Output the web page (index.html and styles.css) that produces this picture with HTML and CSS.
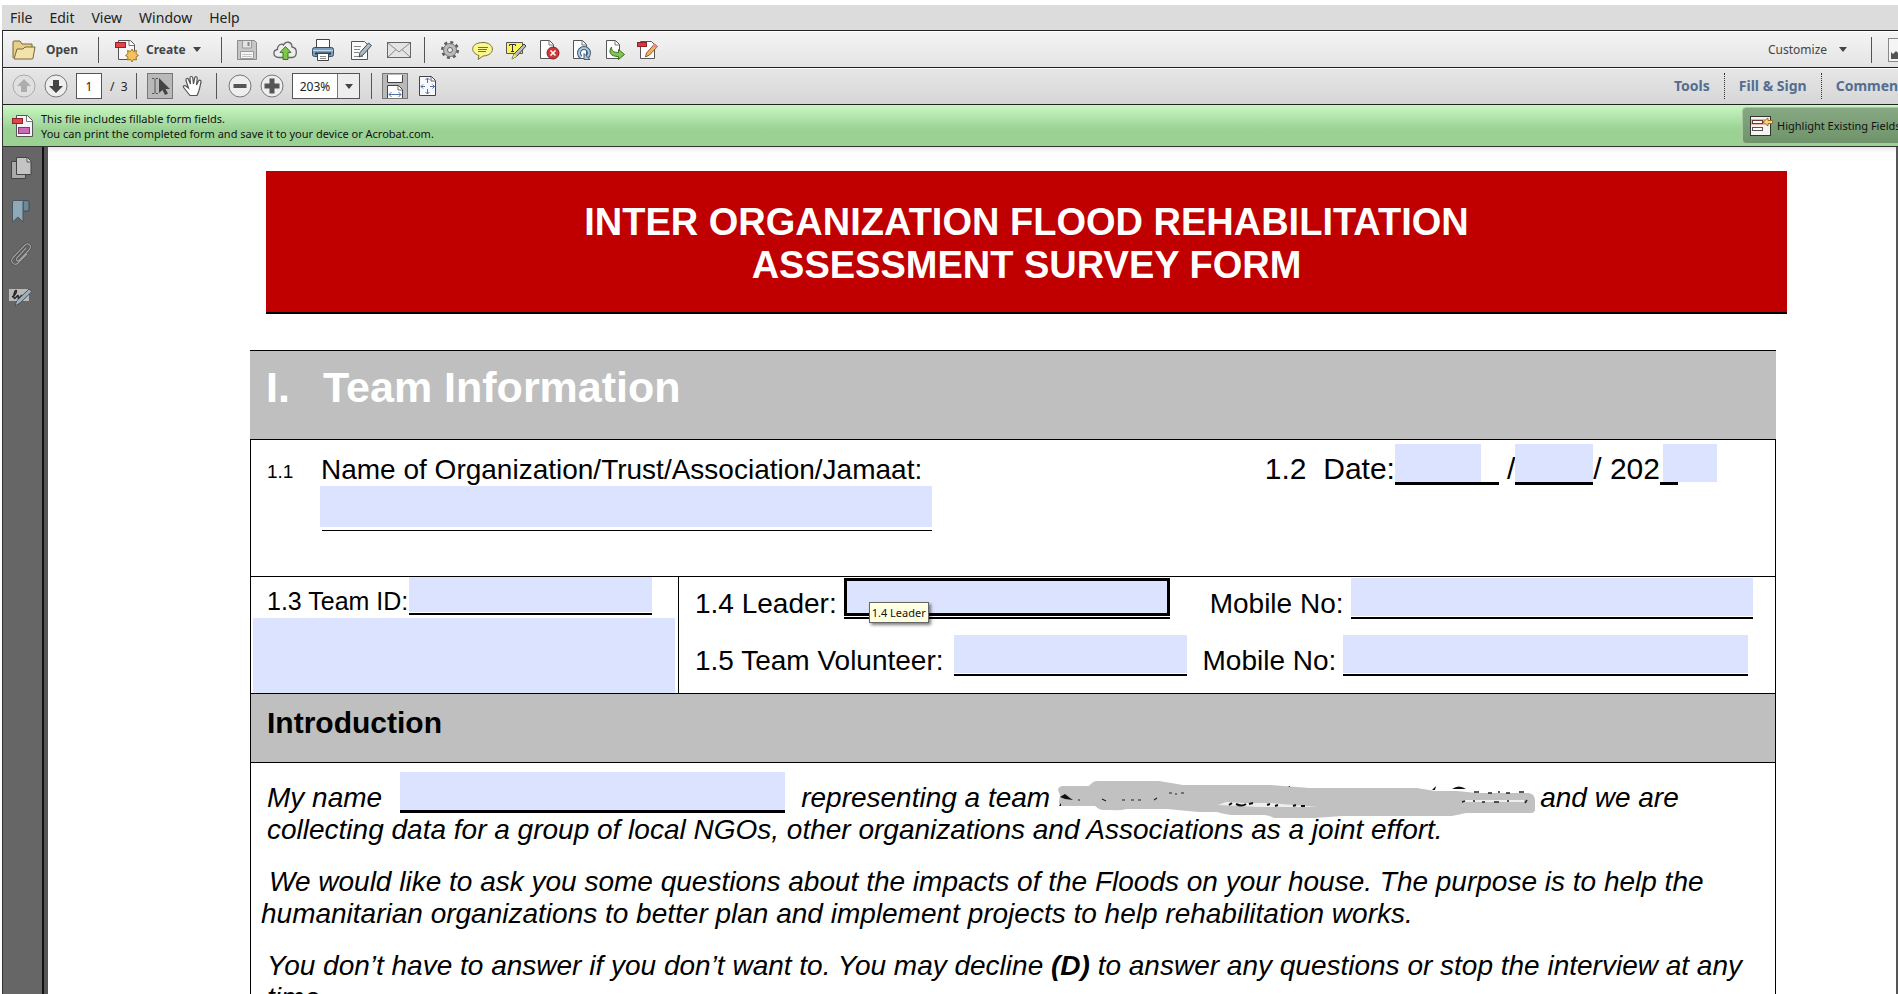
FILE: index.html
```html
<!DOCTYPE html>
<html lang="en">
<head>
    <meta charset="UTF-8">
    <meta name="viewport" content="width=device-width, initial-scale=1.0">
    <title>Assessment Survey Form</title>
    <link rel="stylesheet" href="styles.css">
</head>
<body>
    <nav class="menu-bar">
        <button>File</button>
        <button>Edit</button>
        <button>View</button>
        <button>Window</button>
        <button>Help</button>
    </nav>

    <div class="app">
        <!-- Main toolbar -->
        <div class="toolbar">
            <div class="group open">
                <button class="text-button">
                    <svg width="24" height="20" viewBox="0 0 24 20"><path d="M1 18V2q0-1 1-1h6l2 3h10v4" fill="#e8cf86" stroke="#77663a"/><path d="M2 19L5 9h6l2-2h10l-2 11q0 1-1 1z" fill="#f3e3ab" stroke="#77663a"/></svg>
                    Open
                </button>
            </div>
            <span class="sep"></span>
            <div class="group create">
                <button class="text-button">
                    <svg width="24" height="24" viewBox="0 0 24 24"><path d="M3.500 2.500h12l4 4v15h-16z" fill="#f7f7f7" stroke="#555"/><path d="M14 2.500v5h5" fill="#fff" stroke="#777"/><rect x=".5" y="4.500" width="10" height="5" fill="#e3434b" stroke="#8c2329"/><path d="M17 11l1.500 2.500 3-1-.5 3 2.500 2-2.500 1.500.5 3-3-.5L17 24l-1.500-2.500-3 .5.500-3-2.500-1.500 2.500-2-.5-3 3 1z" fill="#f4c25a" stroke="#a3752a"/></svg>
                    Create
                    <svg class="caret" width="8" height="5" viewBox="0 0 8 5"><path d="M0 0h8L4 5z" fill="#444"/></svg>
                </button>
            </div>
            <span class="sep"></span>
            <div class="group wide">
                <button class="icon" aria-label="Save"><svg viewBox="0 0 24 24"><path d="M2.500 2.500h17l2 2v17h-19z" fill="#c6c6c6" stroke="#8b8b8b"/><path d="M7.500 3v7h9V3" fill="#e3e3e3" stroke="#999"/><path d="M13.500 4v4" stroke="#888" stroke-width="2"/><path d="M5.500 13.500h13v7h-13z" fill="#f5f5f5" stroke="#999"/><path d="M7 16.500h10M7 18.500h10" stroke="#c3c3c3"/></svg></button>
                <button class="icon" aria-label="Upload"><svg viewBox="0 0 24 24"><path d="M6 19.500C-1 19 0 12 4.500 11.500 4 7 9 5 10.500 7 13 2 19 4 19 9c6 1 5.500 10 0 10.500z" fill="#eee" stroke="#666" stroke-width="1.300"/><path d="M12.500 8.500l5.500 6h-3v7h-5v-7H7z" fill="#7fc64b" stroke="#3c7a22"/></svg></button>
                <button class="icon" aria-label="Print"><svg viewBox="0 0 24 24"><path d="M5.500 10V1.500h13V10" fill="#fff" stroke="#444"/><rect x="1.500" y="9.500" width="21" height="9" rx="2" fill="#7c9dbd" stroke="#35506b"/><path d="M2 12.500h20" stroke="#c4d8ea"/><path d="M4 15.500h16" stroke="#28394b" stroke-width="2"/><path d="M6.500 15.500h11v7h-11z" fill="#fff" stroke="#444"/><path d="M9 18.500h6M9 20.500h6" stroke="#888"/></svg></button>
                <button class="icon" aria-label="Edit"><svg viewBox="0 0 24 24"><path d="M2.500 3.500h13l3 3v15h-16z" fill="#fafafa" stroke="#555"/><path d="M5 8.500h7M5 11.500h6M5 14.500h5M5 18.500h9" stroke="#888"/><path d="M19.500 5l3 2.500-8.500 9.500-4 2 1-4.500z" fill="#a9bccb" stroke="#3f4a54"/></svg></button>
                <button class="icon" aria-label="Email"><svg viewBox="0 0 24 24"><rect x=".5" y="4.500" width="23" height="15" fill="#e4e4e4" stroke="#666"/><path d="M1 5l11 9L23 5M1 19l8-7.500M23 19l-8-7.500" fill="none" stroke="#888"/></svg></button>
            </div>
            <span class="sep"></span>
            <div class="group tight">
                <button class="icon" aria-label="Settings"><svg viewBox="0 0 24 24"><circle cx="12" cy="12" r="7.500" fill="none" stroke="#5d5d5d" stroke-width="3" stroke-dasharray="2.945 2.945"/><circle cx="12" cy="12" r="6.500" fill="#bbb" stroke="#777"/><circle cx="12" cy="12" r="2.500" fill="#eee" stroke="#666"/></svg></button>
                <button class="icon" aria-label="Comment"><svg viewBox="0 0 24 24"><path d="M12 4.500c12 0 13 13 0 13.500l-5 3.500 1-4C-1 15-1 4.500 12 4.500z" fill="#fbf78f" stroke="#77733a"/><path d="M7 9.500h10M7 11.500h9M7 13.500h8" stroke="#77733a"/></svg></button>
                <button class="icon" aria-label="Highlight text"><svg viewBox="0 0 24 24"><path d="M2.500 4.500h16v11h-16z" fill="#fbf45c" stroke="#555"/><path d="M5.500 8V6.500h6V8M8.500 6.500v7M7 13.500h3" fill="none" stroke="#333"/><path d="M20 6l2 2-9 10-5 3 2-5z" fill="#b9bdb9" stroke="#444"/><path d="M10 16l3 2-5 3z" fill="#eee95b"/></svg></button>
                <button class="icon" aria-label="Delete pages"><svg viewBox="0 0 24 24"><path d="M3.500 2.500h9l4 4v14h-13z" fill="#fff" stroke="#555"/><path d="M12 2.500v4.500h4" fill="none" stroke="#777"/><circle cx="16" cy="15" r="6" fill="#d2373b" stroke="#812024"/><path d="M13.500 12.500l5 5m0-5l-5 5" stroke="#fff" stroke-width="1.600"/></svg></button>
                <button class="icon" aria-label="Rotate pages"><svg viewBox="0 0 24 24"><path d="M3.500 2.500h9l4 4v14h-13z" fill="#fff" stroke="#555"/><path d="M12 2.500v4.500h4" fill="none" stroke="#777"/><path d="M11 19a5 5 0 1 1 6 0" fill="none" stroke="#456079" stroke-width="4"/><path d="M11 19a5 5 0 1 1 6 0" fill="none" stroke="#a9c8e4" stroke-width="2"/><path d="M14 15.500v6h6z" fill="#a9c8e4" stroke="#456079"/></svg></button>
                <button class="icon" aria-label="Extract pages"><svg viewBox="0 0 24 24"><path d="M3.500 2.500h9l4 4v14h-13z" fill="#fff" stroke="#555"/><path d="M12 2.500v4.500h4" fill="none" stroke="#777"/><path d="M8.500 9c0 4 2 5.500 7 5.500v-3l6 5-6 5v-3c-8 0-10.500-4-7-9.500z" fill="#83c64f" stroke="#376f22"/></svg></button>
                <button class="icon" aria-label="Edit PDF"><svg viewBox="0 0 24 24"><path d="M4.500 3.500h11l3 3v14h-14z" fill="#fff" stroke="#555"/><rect x="1.500" y="4.500" width="9" height="4" fill="#e3343b" stroke="#8c2329"/><path d="M18.500 6l3 2.500-8 8.500-4 2 1-4z" fill="#f1b16b" stroke="#8c5a2c"/><path d="M18.500 6l3 2.500-2 2-3-2.500z" fill="#ef8b86"/></svg></button>
            </div>
            <div class="customize">
                <button class="plain">Customize <svg class="caret" width="8" height="5" viewBox="0 0 8 5"><path d="M0 0h8L4 5z" fill="#444"/></svg></button>
                <span class="sep"></span>
                <button class="icon" aria-label="Read mode"><svg viewBox="0 0 24 24"><rect x=".5" y=".5" width="23" height="23" fill="#f5f5f5" stroke="#888"/><path d="M3 21v-7l2 2 3-3 2 2 6-6v12z" fill="#555"/></svg></button>
            </div>
        </div>

        <!-- Page and zoom toolbar -->
        <div class="toolbar second">
            <div class="group pages">
                <button class="icon" aria-label="Previous page"><svg viewBox="0 0 24 24"><circle cx="12" cy="12" r="11" fill="#e0e0e0" stroke="#aaa"/><path d="M12 5l7 7h-4v6H9v-6H5z" fill="#adadad"/></svg></button>
                <button class="icon" aria-label="Next page"><svg viewBox="0 0 24 24"><circle cx="12" cy="12" r="11" fill="#eee" stroke="#777"/><path d="M12 19l-7-7h4V6h6v6h4z" fill="#444"/></svg></button>
                <input class="page-number" type="text" value="1" aria-label="Page number">
                <span>/&nbsp; 3</span>
            </div>
            <span class="sep"></span>
            <div class="group tools">
                <button class="icon pressed" aria-label="Select"><svg viewBox="0 0 24 24"><path d="M4 4.500h2l1 1 1-1h2M7 5.500v13M4 19.500h2l1-1 1 1h2" fill="none" stroke="#555"/><path d="M11 4v15l3.500-3 2.500 5 3-1.500-2.500-4.500H22z" fill="#444"/></svg></button>
                <button class="icon" aria-label="Hand"><svg viewBox="0 0 24 24"><path d="M9 21.500L3 14c-2-2.500 1-3 2.500-1.500L7.500 14 5 6.500c-.5-2.500 2-2.500 2.500-1L9.500 10 9 4c0-2 2.500-2 2.800 0l.7 6 1.200-6c.5-2 2.800-1.500 2.500.5L15.500 11l2-4c1-1.500 3-.5 2.500 1-1 4-1.500 9-4 13.500z" fill="#fff" stroke="#555" stroke-width="1.200"/></svg></button>
            </div>
            <span class="sep"></span>
            <div class="group zoom">
                <button class="icon" aria-label="Zoom out"><svg viewBox="0 0 24 24"><circle cx="12" cy="12" r="11" fill="#eee" stroke="#777"/><path d="M5.500 10h13v4h-13z" fill="#555"/></svg></button>
                <button class="icon" aria-label="Zoom in"><svg viewBox="0 0 24 24"><circle cx="12" cy="12" r="11" fill="#eee" stroke="#777"/><path d="M4.500 9.500h5v-5h5v5h5v5h-5v5h-5v-5h-5z" fill="#555"/></svg></button>
                <div class="combo">
                    <input type="text" value="203%" aria-label="Zoom level">
                    <button aria-label="Zoom presets"><svg width="8" height="5" viewBox="0 0 8 5"><path d="M0 0h8L4 5z" fill="#444"/></svg></button>
                </div>
            </div>
            <span class="sep"></span>
            <div class="group tools">
                <button class="icon pressed" aria-label="Fit width"><svg viewBox="0 0 24 24"><path d="M4.500 1v7.500h15V1" fill="#fff" stroke="#444"/><path d="M4.500 24V11.500h11l4 4V24" fill="#fff" stroke="#444"/><path d="M15 12v4h4" fill="none" stroke="#666"/><path d="M6 20.500h12M8.500 18L6 20.500 8.500 23M15.500 18l2.500 2.500-2.500 2.500" fill="none" stroke="#5470a8"/></svg></button>
                <button class="icon" aria-label="Fit page"><svg viewBox="0 0 24 24"><path d="M3.500 2.500h12l4 4v15h-16z" fill="#f6f8fb" stroke="#444"/><path d="M15 3v4h4" fill="none" stroke="#666"/><path d="M11.500 4v5M11.500 15v5M5 12.500h4M14 12.500h5" stroke="#5470a8"/><path d="M9.500 6l2-2 2 2M9.500 18l2 2 2-2M7 10.500l-2 2 2 2M16.500 10.500l2 2-2 2" fill="none" stroke="#5470a8"/></svg></button>
            </div>
            <div class="panes">
                <a href="#">Tools</a>
                <a href="#">Fill &amp; Sign</a>
                <a href="#">Comment</a>
            </div>
        </div>

        <!-- Form message bar -->
        <div class="message-bar">
            <svg width="22" height="24" viewBox="0 0 22 24"><path d="M4.500 1.500h11l5 5v16h-16z" fill="#faf4fa" stroke="#555"/><path d="M14.500 2v5.500h6" fill="#fff" stroke="#777"/><rect x=".5" y="4.500" width="10" height="5" fill="#e3434b" stroke="#8c2329"/><rect x="6.500" y="13.500" width="11" height="6" fill="#cc6bb5" stroke="#7a3a6c"/></svg>
            <p>This file includes fillable form fields.<br>You can print the completed form and save it to your device or Acrobat.com.</p>
            <div class="highlight-slot">
                <button class="highlight">
                    <svg width="23" height="20" viewBox="0 0 23 20"><rect x=".5" y=".5" width="20" height="19" fill="#f7f3f0" stroke="#333"/><rect x="1" y="3" width="14" height="6" fill="#eeb0a0"/><rect x="2.500" y="4.500" width="10" height="3" fill="#fff" stroke="#6b3a33"/><rect x="2.500" y="11.500" width="10" height="3" fill="#fff" stroke="#555"/><path d="M13 6l5-4v2.500h4.500v3H18V10z" fill="#f7d774" stroke="#94712b"/></svg>
                    Highlight Existing Fields
                </button>
            </div>
        </div>

        <div class="workspace">
            <aside class="side-bar">
                <button aria-label="Page thumbnails"><svg viewBox="0 0 24 24"><path d="M2.500 5.500h14v17h-14z" fill="#aaa" stroke="#444"/><path d="M7.500 1.500h11l3.500 3.500v13.500H7.500z" fill="#c4c4c4" stroke="#444"/><path d="M18 2v4h4" fill="#ddd" stroke="#555"/></svg></button>
                <button aria-label="Bookmarks"><svg viewBox="0 0 24 24"><path d="M14 1.500h4q2 0 2 2V12h-6z" fill="#6f8898" stroke="#3f4c55"/><path d="M3.500 3q0-1.500 1.500-1.500h11q-2 0-2 2V23l-5-5-5.500 5z" fill="#8fa9b9" stroke="#46555f"/></svg></button>
                <button aria-label="Attachments"><svg viewBox="0 0 24 24"><path d="M17 6L8 16c-1.500 2 .5 4 2.500 2L20 8c4-4.500-1-8-4.500-4.500L4 15.500c-4 5 2 9 5.500 5L18 12" fill="none" stroke="#4c4c4c" stroke-width="2.600"/><path d="M17 6L8 16c-1.500 2 .5 4 2.500 2L20 8c4-4.500-1-8-4.500-4.500L4 15.500c-4 5 2 9 5.500 5L18 12" fill="none" stroke="#a2a2a2" stroke-width="1.200"/></svg></button>
                <button aria-label="Signatures"><svg viewBox="0 0 24 24"><path d="M0 4h20v12H0z" fill="#b9b9b9"/><path d="M3 12c4-2 5-6 4-6.500S4 11 5 13s3-3 4-2.500S8 14 10 13l3-3" fill="none" stroke="#222" stroke-width="1.400"/><path d="M20 4l3 2.500L11 18l-5 3 1.500-5z" fill="#9db0bc" stroke="#45525a"/></svg></button>
            </aside>

            <main class="page">
                <h1 class="banner">INTER ORGANIZATION FLOOD REHABILITATION<br>ASSESSMENT SURVEY FORM</h1>

                <form class="survey">
                    <h2 class="section-title"><span>I.</span>Team Information</h2>

                    <div class="row organization">
                        <span class="number">1.1</span>
                        <div class="organization-name">
                            <label for="organization">Name of Organization/Trust/Association/Jamaat:</label>
                            <input id="organization" type="text">
                        </div>
                        <div class="date">
                            <label for="day">1.2&nbsp; Date:</label>
                            <span class="blank day"><input id="day" type="text"></span>
                            <span class="slash">/</span>
                            <span class="blank month"><input type="text" aria-label="Month"></span>
                            <span>/ 202</span>
                            <span class="blank year"><input type="text" aria-label="Year"></span>
                        </div>
                    </div>

                    <div class="row team">
                        <div class="team-id">
                            <div class="line">
                                <label for="team-id">1.3 Team ID:</label>
                                <span class="blank"><input id="team-id" type="text"></span>
                            </div>
                            <textarea aria-label="Team details"></textarea>
                        </div>
                        <div class="members">
                            <div class="line leader">
                                <label for="leader">1.4 Leader:</label>
                                <span class="blank">
                                    <input id="leader" type="text">
                                    <span class="tooltip">1.4 Leader</span>
                                </span>
                                <label for="leader-mobile">Mobile No:</label>
                                <span class="blank mobile"><input id="leader-mobile" type="text"></span>
                            </div>
                            <div class="line volunteer">
                                <label for="volunteer">1.5 Team Volunteer:</label>
                                <span class="blank"><input id="volunteer" type="text"></span>
                                <label for="volunteer-mobile">Mobile No:</label>
                                <span class="blank mobile"><input id="volunteer-mobile" type="text"></span>
                            </div>
                        </div>
                    </div>

                    <h3 class="row introduction">Introduction</h3>

                    <div class="row script">
                        <div class="line">
                            <label for="interviewer">My name</label>
                            <span class="blank interviewer"><input id="interviewer" type="text"></span>
                            <span>representing a team</span>
                            <svg class="redacted" width="478" height="38" viewBox="0 0 478 38">
                                <path d="M4 6h27q4-5 8-5h62l24 4h88l38 3h108l18 3h22l20 2h52q6 1 6 8v8q0 4-4 4h-65l-14 3H285l-29 2h-40q-6-3-10-3h-33q-8-1-14-3h-18l-32-3H69q-8 2-16 1h-9q-4-1-7-4H5q-4 0-4-4l1-7-2-5q0-3 4-4z" fill="#c1c1c1"/>
                                <path d="M2 17l5-3 5 4 3 2-8-1zM1 26l2-3v3zM374 10l4-4-1 4zM394 9q7-5 14 0zM230 7l2-1v1z" fill="#111"/>
                                <path d="M160 25l8-3 18 1h26l24 2 24 2h-60z" fill="#eee"/>
                                <path d="M404 22l4-2h58v2z" fill="#eee"/>
                                <path d="M44 19l4 2M64 20h3M73 20h3M80 20h3M96 20l3-2M111 13h3M117 14h2M123 13h3M20 20h2" fill="none" stroke="#222" stroke-width="1.200"/>
                                <path d="M171 25l3-2M178 24q6 3 10 0M191 24l4-1M209 25l3-1M217 26l3-1M235 26l3-1M243 26h4" fill="none" stroke="#111" stroke-width="2"/>
                                <path d="M404 22l3-1M415 21h2M424 22h3M436 22h5M449 21h2M467 23l2-3M416 12h5M430 13h4M440 12h2M448 13h4M461 12h5" fill="none" stroke="#222" stroke-width="1.500"/>
                            </svg>
                            <span>and we are</span>
                        </div>
                        <p class="continued">collecting data for a group of local NGOs, other organizations and Associations as a joint effort.</p>
                        <p class="purpose">We would like to ask you some questions about the impacts of the Floods on your house. The purpose is to help the<br>humanitarian organizations to better plan and implement projects to help rehabilitation works.</p>
                        <p>You don’t have to answer if you don’t want to. You may decline <b>(D)</b> to answer any questions or stop the interview at any<br>time.</p>
                    </div>
                </form>
            </main>
        </div>
    </div>
</body>
</html>
```
FILE: styles.css
```css
* {
    box-sizing: border-box;
}
body {
    margin: 0;
    padding-top: 5px;
    height: 100vh;
    overflow: hidden;
    display: flex;
    flex-direction: column;
    background: #fff;
    font-family: "Noto Sans", "Open Sans", sans-serif;
    font-size: 12px;
    color: #222;
}
button, input, textarea {
    margin: 0;
    padding: 0;
    border: 0;
    border-radius: 0;
    background: none;
    font: inherit;
    color: inherit;
}
h1, h2, h3, p {
    margin: 0;
}
svg {
    display: block;
    flex-shrink: 0;
}

/* Menu */
.menu-bar {
    display: flex;
    gap: 17px;
    height: 25px;
    margin-left: 2px;
    padding-left: 8px;
    background: #dcdcdc;
    font-size: 14px;
}

/* Toolbars */
.app {
    flex: 1;
    min-height: 0;
    display: flex;
    flex-direction: column;
    margin-left: 2px;
    border-left: 1px solid #333;
    border-top: 1px solid #222;
}
.toolbar {
    display: flex;
    align-items: center;
    flex-shrink: 0;
    height: 37px;
    border-top: 1px solid #fff;
    border-bottom: 1px solid #222;
    background: linear-gradient(#f4f4f4, #e4e4e4);
}
.toolbar.second {
    padding-bottom: 1px;
    background: linear-gradient(#e6e6e6, #d6d6d6);
}
.group {
    display: flex;
    align-items: center;
    flex-shrink: 0;
}
.sep {
    width: 1px;
    height: 26px;
    background: #555;
}
.text-button {
    display: flex;
    align-items: center;
    font-size: 12px;
    font-weight: bold;
    color: #444;
}
.open {
    width: 95px;
    padding-left: 9px;
}
.open .text-button {
    gap: 10px;
}
.create {
    width: 122px;
    padding-left: 16px;
}
.create .text-button {
    gap: 7px;
}
.wide {
    gap: 14px;
    padding: 0 13px;
}
.tight {
    gap: 9px;
    padding: 0 13px;
}
.icon {
    width: 24px;
    height: 24px;
    flex-shrink: 0;
}
.icon svg {
    width: 24px;
    height: 24px;
}
.customize {
    display: flex;
    align-items: center;
    width: 130px;
    margin-left: auto;
    overflow: hidden;
}
.customize .plain {
    display: flex;
    align-items: center;
    gap: 12px;
    width: 103px;
    flex-shrink: 0;
    color: #444;
}
.customize .sep {
    margin-right: 16px;
    flex-shrink: 0;
}
.pages {
    gap: 8px;
    width: 133px;
    padding-left: 9px;
}
.page-number {
    width: 26px;
    height: 26px;
    border: 1px solid #555;
    background: #fff;
    text-align: center;
}
.tools {
    gap: 8px;
    padding: 0 11px 0 10px;
}
.icon.pressed {
    width: 26px;
    height: 26px;
    border: 1px solid #777;
    background: #b9b9b9;
}
.zoom {
    gap: 8px;
    padding: 0 11px;
}
.combo {
    display: flex;
    width: 68px;
    height: 26px;
    border: 1px solid #555;
    background: #fff;
}
.combo input {
    width: 44px;
    text-align: center;
}
.combo button {
    display: flex;
    align-items: center;
    justify-content: center;
    flex: 1;
    border-left: 1px solid #777;
    background: #eee;
}
.panes {
    display: flex;
    width: 238px;
    margin-left: auto;
    overflow: hidden;
    font-size: 14px;
    font-weight: bold;
}
.panes a {
    flex-shrink: 0;
    padding: 0 14px;
    line-height: 26px;
    color: #546e91;
    text-decoration: none;
}
.panes a + a {
    border-left: 1px dotted #333;
}

/* Message bar */
.message-bar {
    display: flex;
    align-items: center;
    flex-shrink: 0;
    height: 42px;
    padding-left: 9px;
    border-bottom: 1px solid #333;
    background: linear-gradient(#c9f7c3, #9bd294 60%, #9bd294);
    color: #111;
    font-size: 11px;
}
.message-bar p {
    margin-left: 7px;
    line-height: 15px;
}
.highlight-slot {
    width: 156px;
    margin-left: auto;
    overflow: hidden;
}
.highlight {
    display: flex;
    align-items: center;
    gap: 4px;
    width: 176px;
    height: 37px;
    padding-left: 7px;
    border: 1px solid #a9c6a4;
    border-radius: 4px;
    background: linear-gradient(#86a882, #6f936b);
    white-space: nowrap;
}

/* Side bar */
.workspace {
    flex: 1;
    min-height: 0;
    display: flex;
}
.side-bar {
    display: flex;
    flex-direction: column;
    align-items: center;
    gap: 19px;
    flex-shrink: 0;
    width: 41px;
    padding: 9px 3px 0 0;
    border-right: 2px solid #111;
    background: #666;
}
.side-bar button {
    width: 24px;
    height: 24px;
}
.side-bar svg {
    width: 24px;
    height: 24px;
}

/* Document page */
.page {
    flex: 1;
    min-width: 0;
    overflow: hidden;
    padding: 24px 109px 0 202px;
    border-left: 4px solid #555;
    border-right: 2px solid #555;
    background: linear-gradient(#e8e8e8, #fff 6px);
    font-family: "Liberation Sans", Arial, sans-serif;
    font-size: 28px;
    line-height: 30px;
    color: #000;
}
.page input, .page textarea {
    display: block;
    background: #dce3ff;
}
.banner {
    margin-left: 16px;
    padding: 30px 0 25px;
    border-bottom: 2px solid #000;
    background: #c00000;
    color: #fff;
    font-size: 38px;
    line-height: 43px;
    text-align: center;
}
.survey {
    margin: 36px 11px 0 0;
    white-space: nowrap;
}
.section-title {
    display: flex;
    height: 90px;
    padding: 11px 0 0 16px;
    border-top: 1px solid #000;
    border-bottom: 1px solid #000;
    background: #bfbfbf;
    color: #fff;
    font-size: 43px;
    line-height: 50px;
}
.section-title span {
    width: 57px;
}
.row {
    border: 1px solid #000;
    border-top: 0;
}
.line {
    display: flex;
    align-items: flex-end;
}
.blank {
    display: block;
    flex-shrink: 0;
    padding-bottom: 1px;
    border-bottom: 2px solid #000;
}
.blank input {
    width: 100%;
    height: 38px;
}

.organization {
    display: flex;
    height: 137px;
    padding: 4px 58px 0 16px;
}
.number {
    width: 53px;
    padding-top: 13px;
    font-size: 19px;
}
.organization-name {
    padding-top: 10px;
    line-height: 32px;
}
.organization-name label {
    display: block;
    padding-left: 1px;
}
.organization-name::after {
    content: "";
    display: block;
    margin: 3px 0 0 2px;
    border-bottom: 1px solid #000;
}
.organization-name input {
    width: 612px;
    height: 41px;
}
.date {
    display: flex;
    align-items: flex-end;
    height: 41px;
    margin-left: auto;
    font-size: 30px;
    line-height: 32px;
}
.date .blank {
    padding-bottom: 0;
    border-bottom-width: 3px;
}
.day {
    width: 104px;
}
.day input {
    width: 86px;
}
.slash {
    margin-left: 8px;
}
.month {
    width: 78px;
}
.year {
    width: 18px;
    margin-right: 39px;
}
.year input {
    width: 54px;
    margin-left: 3px;
}

.team {
    display: flex;
    height: 117px;
}
.team-id {
    width: 428px;
    flex-shrink: 0;
    border-right: 1px solid #000;
    font-size: 25px;
    line-height: 28px;
}
.team-id .line {
    padding-left: 16px;
}
.team-id .blank {
    width: 243px;
    margin-left: 1px;
}
.team-id .blank input {
    height: 35px;
}
.team-id textarea {
    width: 422px;
    height: 75px;
    margin: 3px 0 0 2px;
    resize: none;
}
.members {
    flex: 1;
    padding: 1px 22px 0 16px;
}
.members .blank {
    margin-left: 7px;
}
.members .mobile {
    flex: 1;
}
.leader .blank {
    position: relative;
    width: 326px;
    margin-right: 40px;
}
.leader .mobile {
    margin-right: 0;
}
#leader {
    border: 3px solid #000;
}
.tooltip {
    position: absolute;
    left: 25px;
    top: 24px;
    padding: 0 2px;
    border: 1px solid #666;
    background: #ffffe1;
    box-shadow: 2px 2px 3px rgba(0, 0, 0, 0.5);
    font-family: "Noto Sans", sans-serif;
    font-size: 11px;
    line-height: 19px;
    color: #111;
}
.volunteer {
    margin-top: 16px;
    padding-right: 5px;
}
.volunteer .blank {
    width: 233px;
    margin-left: 10px;
    margin-right: 16px;
}
.volunteer .mobile {
    margin-left: 7px;
    margin-right: 0;
}

.introduction {
    height: 69px;
    padding: 11px 0 0 16px;
    background: #bfbfbf;
    font-size: 30px;
    line-height: 36px;
}

.script {
    padding: 9px 0 20px 16px;
    font-style: italic;
    line-height: 32px;
}
.script .line {
    line-height: 30px;
}
.interviewer {
    width: 385px;
    margin: 0 16px 0 18px;
    padding-bottom: 0;
    border-bottom-width: 3px;
}
.redacted {
    margin: 0 4px -5px 8px;
}
.script p {
    margin-bottom: 20px;
}
.script .continued {
    padding-top: 1px;
}
.script .purpose {
    margin-left: -6px;
    text-indent: 8px;
}
```
